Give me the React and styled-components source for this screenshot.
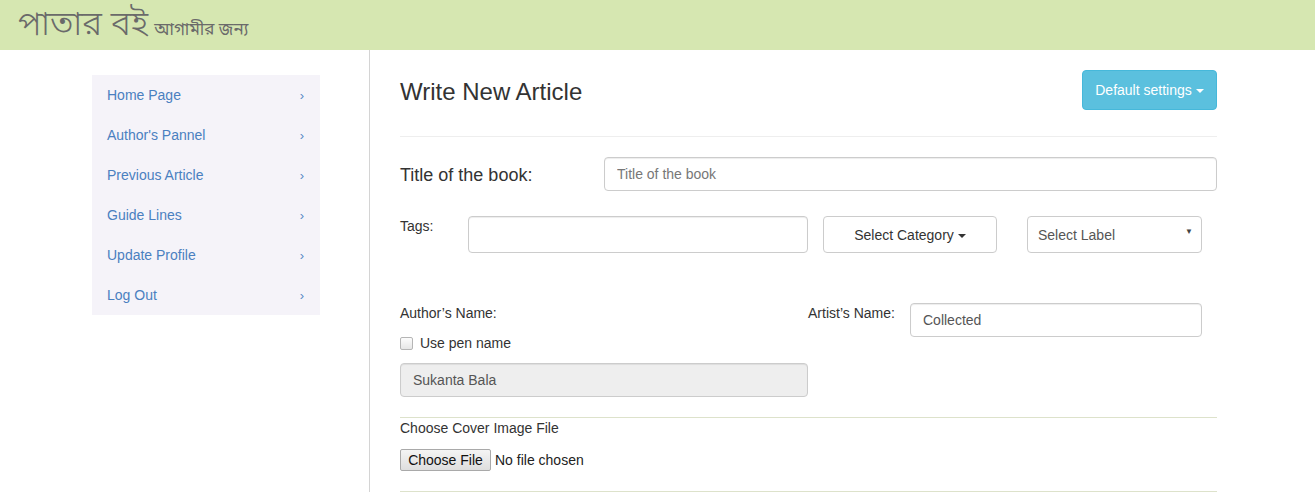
import React from 'react';
import styled, { createGlobalStyle } from 'styled-components';

const GlobalStyle = createGlobalStyle`
  html, body {
    margin: 0;
    padding: 0;
    background: #fff;
    font-family: "Liberation Sans", Arial, sans-serif;
    font-size: 14px;
    color: #333;
  }
  * { box-sizing: border-box; }
`;

const Header = styled.header`
  height: 50px;
  background: #d6e7b1;
  display: flex;
  align-items: baseline;
  padding: 4px 0 0 18px;
  font-family: "Noto Sans Bengali", "Noto Serif Bengali", "Lohit Bengali", "Noto Sans", sans-serif;
  color: #6a6a6a;
`;

const Brand = styled.span`
  font-size: 34px;
  font-weight: 300;
  line-height: 46px;
`;

const Tagline = styled.span`
  font-size: 17px;
  line-height: 24px;
  margin-left: 6px;
`;

const Layout = styled.div`
  display: grid;
  grid-template-columns: 370px 1fr;
  min-height: 442px;
`;

const Sidebar = styled.aside`
  border-right: 1px solid #d4d4d4;
  padding: 25px 49px 0 92px;
`;

const Menu = styled.ul`
  list-style: none;
  margin: 0;
  padding: 0;
  background: #f5f3f9;
  width: 228px;
`;

const MenuItem = styled.li`
  height: 40px;
  display: flex;
  align-items: center;
  justify-content: space-between;
  padding: 0 16px 0 15px;
  color: #4a80c0;
  font-size: 14px;
`;

const Chevron = styled.span`
  font-size: 13px;
  color: #5b8cc6;
`;

const Main = styled.main`
  padding: 20px 98px 0 30px;
`;

const TopRow = styled.div`
  display: flex;
  justify-content: space-between;
  align-items: center;
  height: 40px;
`;

const Heading = styled.h1`
  margin: 4px 0 0;
  font-size: 24px;
  font-weight: 400;
  color: #333;
`;

const InfoButton = styled.button`
  height: 40px;
  width: 135px;
  border: 1px solid #46b8da;
  border-radius: 4px;
  background: #5bc0de;
  color: #fff;
  font-family: inherit;
  font-size: 14px;
  padding: 0;
`;

const Caret = styled.span`
  display: inline-block;
  width: 0;
  height: 0;
  margin-left: 4px;
  vertical-align: middle;
  border-top: 4px solid ${p => p.$color || '#333'};
  border-left: 4px solid transparent;
  border-right: 4px solid transparent;
`;

const Rule = styled.hr`
  border: 0;
  border-top: 1px solid ${p => p.$color || '#eee'};
  margin: ${p => p.$margin || '20px 0'};
`;

const TitleRow = styled.div`
  display: flex;
  align-items: center;
`;

const BigLabel = styled.label`
  width: 204px;
  font-size: 18px;
  color: #333;
  padding-top: 3px;
`;

const Input = styled.input`
  display: block;
  height: ${p => p.$h || 34}px;
  width: ${p => (p.$w ? `${p.$w}px` : '100%')};
  flex: ${p => (p.$grow ? 1 : 'none')};
  border: 1px solid #ccc;
  border-radius: 4px;
  padding: 0 12px;
  font-family: inherit;
  font-size: 14px;
  color: #555;
  background: ${p => (p.disabled ? '#eee' : '#fff')};
  box-shadow: inset 0 1px 1px rgba(0, 0, 0, 0.075);
  &::placeholder { color: #777; }
`;

const TagsRow = styled.div`
  display: flex;
  align-items: flex-start;
  margin-top: 25px;
`;

const SmallLabel = styled.label`
  display: block;
  width: ${p => (p.$w ? `${p.$w}px` : 'auto')};
  font-size: 14px;
  line-height: 20px;
  color: #333;
`;

const OutlineButton = styled.button`
  height: 37px;
  width: 174px;
  margin-left: 15px;
  border: 1px solid #ccc;
  border-radius: 4px;
  background: #fff;
  color: #333;
  font-family: inherit;
  font-size: 14px;
`;

const SelectBox = styled.div`
  position: relative;
  margin-left: 30px;
  width: 175px;
  height: 37px;
  border: 1px solid #ccc;
  border-radius: 4px;
  display: flex;
  align-items: center;
  padding-left: 10px;
  color: #555;
  font-size: 14px;
`;

const SelectArrow = styled.span`
  position: absolute;
  right: 8px;
  top: 10px;
  font-size: 8px;
  color: #444;
`;

const NamesRow = styled.div`
  display: flex;
  margin-top: 50px;
`;

const AuthorCol = styled.div`
  width: 408px;
  display: flex;
  flex-direction: column;
  gap: 10px;
`;

const ArtistCol = styled.div`
  display: flex;
  align-items: flex-start;
`;

const CheckRow = styled.label`
  display: flex;
  align-items: center;
  gap: 7px;
  font-size: 14px;
  line-height: 20px;
`;

const Check = styled.span`
  width: 13px;
  height: 13px;
  border: 1px solid #b5b5b5;
  border-radius: 2px;
  background: linear-gradient(#fcfcfc, #e6e6e6);
`;

const FileRow = styled.div`
  display: flex;
  align-items: center;
  gap: 4px;
  margin-top: 11px;
`;

const FileButton = styled.button`
  height: 22px;
  width: 91px;
  border: 1px solid #a9a9a9;
  border-radius: 2px;
  background: linear-gradient(#f4f4f4, #dedede);
  font-family: inherit;
  font-size: 14px;
  color: #111;
  padding: 0;
`;

const FileText = styled.span`
  font-size: 14px;
  color: #222;
`;

const menu = ['Home Page', "Author's Pannel", 'Previous Article', 'Guide Lines', 'Update Profile', 'Log Out'];

export default function App() {
  return (
    <>
      <GlobalStyle />
      <Header>
        <Brand>পাতার বই</Brand>
        <Tagline>আগামীর জন্য</Tagline>
      </Header>
      <Layout>
        <Sidebar>
          <Menu>
            {menu.map(item => (
              <MenuItem key={item}>
                {item}
                <Chevron>›</Chevron>
              </MenuItem>
            ))}
          </Menu>
        </Sidebar>
        <Main>
          <TopRow>
            <Heading>Write New Article</Heading>
            <InfoButton>
              Default settings<Caret $color="#fff" />
            </InfoButton>
          </TopRow>
          <Rule $margin="26px 0 20px" />
          <TitleRow>
            <BigLabel>Title of the book:</BigLabel>
            <Input $grow placeholder="Title of the book" />
          </TitleRow>
          <TagsRow>
            <SmallLabel $w={68}>Tags:</SmallLabel>
            <Input $w={340} $h={37} />
            <OutlineButton>
              Select Category<Caret />
            </OutlineButton>
            <SelectBox>
              Select Label
              <SelectArrow>▼</SelectArrow>
            </SelectBox>
          </TagsRow>
          <NamesRow>
            <AuthorCol>
              <SmallLabel>Author’s Name:</SmallLabel>
              <CheckRow>
                <Check />
                Use pen name
              </CheckRow>
              <Input disabled value="Sukanta Bala" readOnly />
            </AuthorCol>
            <ArtistCol>
              <SmallLabel $w={102}>Artist’s Name:</SmallLabel>
              <Input $w={292} defaultValue="Collected" />
            </ArtistCol>
          </NamesRow>
          <Rule $color="#dde2cb" $margin="20px 0 0" />
          <SmallLabel>Choose Cover Image File</SmallLabel>
          <FileRow>
            <FileButton>Choose File</FileButton>
            <FileText>No file chosen</FileText>
          </FileRow>
          <Rule $color="#dde2cb" $margin="20px 0 0" />
        </Main>
      </Layout>
    </>
  );
}
